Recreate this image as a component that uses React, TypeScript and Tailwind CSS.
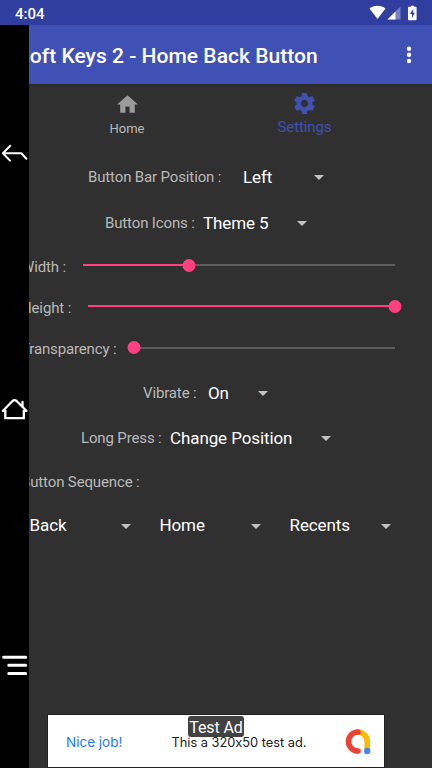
import clsx from 'clsx'

function Caret() {
  return <span className="h-0 w-0 shrink-0 border-x-[5px] border-t-[5px] border-x-transparent border-t-[#c1c1c1]" />
}

// Label width includes the gap before the value, value width the gap before the caret
function SelectRow({ label, value, className, labelWidth, valueWidth }: {
  label: string
  value: string
  className: string
  labelWidth: string
  valueWidth: string
}) {
  return (
    <div className={clsx('flex items-center whitespace-nowrap', className)}>
      <span className={clsx('shrink-0 text-[15px] tracking-[-0.14px] text-[#b9b9b9]', labelWidth)}>{label}</span>
      <span className={clsx('shrink-0 pt-px text-[17px] tracking-[-0.1px] text-white', valueWidth)}>{value}</span>
      <Caret />
    </div>
  )
}

function SliderRow({ label, value, className, labelWidth }: {
  label: string
  value: number
  className: string
  labelWidth: string
}) {
  return (
    <div className={clsx('flex items-center pr-[37.5px] pl-[21px] whitespace-nowrap', className)}>
      <span className={clsx('shrink-0 pt-px text-[15px] tracking-[-0.14px] text-[#b9b9b9]', labelWidth)}>{label}</span>
      <div className="relative -top-[1.5px] h-[2px] flex-1 bg-[#5c5c5c]">
        <div className="h-full bg-[#ff4081]" style={{ width: `${value}%` }} />
        <div
          className="absolute -top-[5.5px] h-[13px] w-[13px] -translate-x-1/2 rounded-full bg-[#ff4081]"
          style={{ left: `${value}%` }}
        />
      </div>
    </div>
  )
}

function StatusBar() {
  return (
    <div className="flex h-[25px] items-center justify-between bg-[#303f9f] pr-[14px] pl-[15px]">
      <span className="pt-[3px] text-[15px] font-medium text-white">4:04</span>
      <svg width="49" height="16" viewBox="0 0 49 16" fill="#fff">
        <path d="M0.5 3.5C5 -0.2 12 -0.2 16.5 3.5L8.5 14Z" />
        <path d="M31.5 1.5V14.5H18.5Z" fillOpacity=".35" />
        <path d="M26.5 6.5V14.5H18.5Z" />
        <path d="M40 1.8h1.8V.8h3v1h1.8a1 1 0 0 1 1 1v11.4a1 1 0 0 1-1 1H40a1 1 0 0 1-1-1V2.8a1 1 0 0 1 1-1Z" />
        <path d="M44.2 4l-3.2 5H43v4L45.8 7.7H44.2Z" fill="#303f9f" />
      </svg>
    </div>
  )
}

function AppBar() {
  return (
    <header className="flex h-[59px] items-center justify-between bg-[#3f51b5] pr-[20px] pl-[17px] text-white">
      <h1 className="pt-[4px] text-[21px] font-medium tracking-[0.03px] whitespace-nowrap">Soft Keys 2 - Home Back Button</h1>
      <svg width="6" height="18" viewBox="0 0 6 18" fill="#fff">
        <circle cx="3" cy="2.7" r="2.2" />
        <circle cx="3" cy="8.8" r="2.2" />
        <circle cx="3" cy="15" r="2.2" />
      </svg>
    </header>
  )
}

function Tabs() {
  return (
    <nav className="flex h-[70px] justify-between bg-linear-to-b from-[#292929] to-[#303030] to-[6%] pr-[39px] pl-[39px]">
      <div className="flex w-[176px] flex-col items-center pt-[8px] text-[#b9b9b9]">
        <svg className="h-[25px] w-[25px]" viewBox="0 0 24 24" fill="#9b9b9b">
          <path d="M10 20v-6h4v6h5v-8h3L12 3 2 12h3v8z" />
        </svg>
        <span className="mt-[3px] text-[13px] leading-[18px]">Home</span>
      </div>
      <div className="flex w-[177px] flex-col items-center pt-[7px] text-[#3f51b5]">
        <svg className="h-[25px] w-[25px]" viewBox="0 0 24 24" fill="currentColor">
          <path d="M19.43 12.98c.04-.32.07-.64.07-.98s-.03-.66-.07-.98l2.11-1.65c.19-.15.24-.42.12-.64l-2-3.46c-.12-.22-.39-.3-.61-.22l-2.49 1c-.52-.4-1.08-.73-1.69-.98l-.38-2.65C14.46 2.18 14.25 2 14 2h-4c-.25 0-.46.18-.49.42l-.38 2.65c-.61.25-1.17.59-1.69.98l-2.49-1c-.23-.09-.49 0-.61.22l-2 3.46c-.13.22-.07.49.12.64l2.11 1.65c-.04.32-.07.65-.07.98s.03.66.07.98l-2.11 1.65c-.19.15-.24.42-.12.64l2 3.46c.12.22.39.3.61.22l2.49-1c.52.4 1.08.73 1.69.98l.38 2.65c.03.24.24.42.49.42h4c.25 0 .46-.18.49-.42l.38-2.65c.61-.25 1.17-.59 1.69-.98l2.49 1c.23.09.49 0 .61-.22l2-3.46c.12-.22.07-.49-.12-.64l-2.11-1.65zM12 15.5c-1.93 0-3.5-1.57-3.5-3.5s1.57-3.5 3.5-3.5 3.5 1.57 3.5 3.5-1.57 3.5-3.5 3.5z" />
        </svg>
        <span className="mt-[2px] text-[15px] leading-[18px] tracking-[-0.1px]">Settings</span>
      </div>
    </nav>
  )
}

const sequence = ['Back', 'Home', 'Recents']

// Soft key overlay, floats over the left edge of the app
function KeyBar() {
  return (
    <aside className="absolute top-[25px] bottom-0 left-0 flex w-[29px] flex-col items-center bg-black">
      <svg className="mt-[118px]" width="29" height="20" viewBox="0 0 29 20" fill="none" stroke="#fff" strokeWidth="2" strokeLinecap="round" strokeLinejoin="round">
        <path d="M10.3 2.7L2.9 10.3L10 17.6M2.9 10.3H21.3L26.4 15.8" />
      </svg>
      <svg className="mt-[235px]" width="29" height="24" viewBox="0 0 29 24" fill="none" stroke="#fff" strokeWidth="2.3" strokeLinecap="round" strokeLinejoin="miter">
        <path d="M3 12.8L12.5 3Q14.5 1.3 16.6 3L26.4 12.8" />
        <path d="M22.5 8.5V4" />
        <path d="M3 12.8H5.3V20.2H23.8V12.8H26" />
      </svg>
      <svg className="mt-[232px]" width="29" height="22" viewBox="0 0 29 22" stroke="#fff" strokeWidth="3.1" strokeLinecap="round">
        <path d="M3.6 3.2H25.6M8.8 11.3H25.6M8.8 19.5H25.6" />
      </svg>
    </aside>
  )
}

function AdBanner() {
  return (
    <div className="relative mx-auto mt-auto mb-px flex h-[52px] w-[336px] items-center bg-white shadow-[0_0_0_1px_#202020]">
      <span className="w-[105.5px] pt-[3px] pl-[18px] font-[Inter,sans-serif] text-[13.5px] text-[#2579f6]">Nice job!</span>
      <span className="pt-[4px] pl-[18px] font-[Inter,sans-serif] text-[12.8px] text-[#202124] [font-feature-settings:'calt'_0]">This a 320x50 test ad.</span>
      <svg className="mr-[12px] ml-auto" width="28" height="28" viewBox="0 0 28 28" fill="none" strokeWidth="5.6" strokeLinecap="round">
        <path d="M14 5A9.3 9.3 0 0 1 23.2 14V22.5" stroke="#fbbc04" />
        <path d="M14 5A9.5 9.5 0 0 0 14 24" stroke="#ea4335" />
        <circle cx="23.2" cy="24" r="3.2" fill="#4285f4" />
      </svg>
      <span className="absolute top-px left-[140px] flex h-[21px] w-[56px] items-center justify-center rounded-[3px] bg-[#424242] pt-[2px] text-[16px] tracking-[-0.1px] whitespace-nowrap text-white">
        Test Ad
      </span>
    </div>
  )
}

export default function App() {
  return (
    <main className="relative flex h-[768px] w-[432px] flex-col overflow-hidden bg-[#303030] font-[Roboto,sans-serif]">
      <StatusBar />
      <AppBar />
      <Tabs />
      <SelectRow label="Button Bar Position :" value="Left" className="h-[46px] pl-[88px]" labelWidth="w-[155px]" valueWidth="w-[71px]" />
      <SelectRow label="Button Icons :" value="Theme 5" className="h-[46px] pl-[105px]" labelWidth="w-[98px]" valueWidth="w-[94px]" />
      <SliderRow label="Width :" value={34} className="h-[41px]" labelWidth="w-[61.5px]" />
      <SliderRow label="Height :" value={100} className="h-[41px]" labelWidth="w-[67px]" />
      <SliderRow label="Transparency :" value={0} className="h-[42px]" labelWidth="w-[113px]" />
      <SelectRow label="Vibrate :" value="On" className="h-[46px] pl-[143px]" labelWidth="w-[65px]" valueWidth="w-[50px]" />
      <SelectRow label="Long Press :" value="Change Position" className="h-[45px] pl-[81px]" labelWidth="w-[89px]" valueWidth="w-[151px]" />
      <p className="flex h-[42px] items-center pl-[21px] text-[15px] tracking-[-0.14px] text-[#b9b9b9]">Button Sequence :</p>
      <div className="grid h-[46px] grid-cols-[130px_130px_130px] items-center pl-[29.5px]">
        {sequence.map((name) => (
          <div key={name} className="flex items-center justify-between pr-[28.5px]">
            <span className="text-[17px] tracking-[-0.1px] text-white">{name}</span>
            <Caret />
          </div>
        ))}
      </div>
      <AdBanner />
      <KeyBar />
    </main>
  )
}
